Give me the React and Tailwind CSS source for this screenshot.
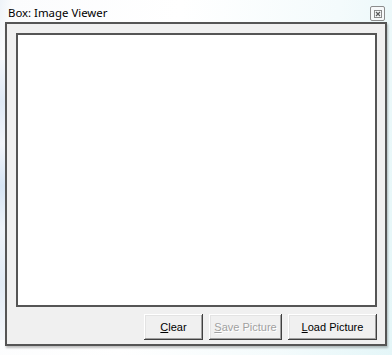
import React from "react";

function Btn({ children, w, disabled }) {
  return (
    <div
      className={`h-[26px] ${w} flex items-center justify-center bg-[#f0f0f0] shadow-[inset_-1px_-1px_0_#404040,inset_1px_1px_0_#ffffff,inset_-2px_-2px_0_#a0a0a0,inset_2px_2px_0_#e3e3e3] text-[11px] ${
        disabled ? "text-[#a0a0a0] [text-shadow:1px_1px_0_#ffffff]" : "text-black"
      }`}
      style={{ fontFamily: "'Liberation Sans', Arial, sans-serif" }}
    >
      {children}
    </div>
  );
}

export default function App() {
  return (
    <div className="w-[392px] h-[355px] flex flex-col bg-[linear-gradient(100deg,#eef3f8_0%,#fbfcfd_3%,#ffffff_40%,#f4fbfc_75%,#e4f6f8_100%)] relative overflow-hidden">
      <div className="absolute left-0 top-[60px] w-[5px] h-[280px] bg-[linear-gradient(180deg,#f3f6fa_0%,#dfe9f5_15%,#f2f5fa_30%,#d6e4f3_45%,#eef3f9_60%,#e2ebf5_80%,#f3f6fa_100%)]" />
      <div className="h-[22px] flex items-start justify-between pl-[8px] pr-[7px]">
        <span
          className="mt-[5px] text-[11.4px] leading-[16px] text-black"
          style={{ fontFamily: "'Noto Sans', 'Open Sans', sans-serif" }}
        >
          Box: Image Viewer
        </span>
        <div className="mt-[6px] w-[15px] h-[15px] border border-[#8c8c8c] rounded-[2px] bg-[#f7f9fa] flex items-center justify-center">
          <svg width="8" height="8" viewBox="0 0 8 8">
            <rect x="0.5" y="0.5" width="7" height="7" fill="none" stroke="#8a8a8a" strokeWidth="1" />
            <path d="M2 2 L6 6 M6 2 L2 6" stroke="#5a5a5a" strokeWidth="1.2" />
          </svg>
        </div>
      </div>
      <div className="mx-[5px] h-[324px] border-2 border-[#555555] bg-[#f0f0f0] pt-[9px] pl-[9px] pr-[8px] pb-[4px] flex flex-col shadow-[1px_2px_2px_rgba(0,0,0,0.25)]">
        <div className="h-[274px] border-2 border-[#555555] bg-white" />
        <div className="mt-[7px] flex justify-end gap-[6px]">
          <Btn w="w-[59px]">
            <span className="underline underline-offset-[1px]">C</span>lear
          </Btn>
          <Btn w="w-[73px]" disabled>
            <span className="underline underline-offset-[1px]">S</span>ave Picture
          </Btn>
          <Btn w="w-[89px]">
            <span className="underline underline-offset-[1px]">L</span>oad Picture
          </Btn>
        </div>
      </div>
    </div>
  );
}
